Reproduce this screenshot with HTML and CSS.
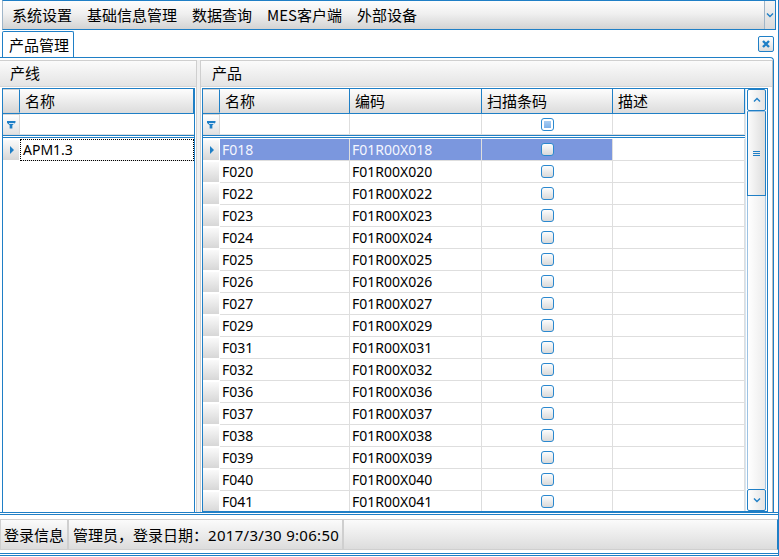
FILE: index.html
```html
<!DOCTYPE html>
<html lang="zh-CN">
<head>
    <meta charset="UTF-8">
    <title>产品管理</title>
    <link rel="stylesheet" href="styles.css">
</head>
<body>
    <div class="window">
        <!-- menu -->
        <div class="menubar">
            <span class="menu-item">系统设置</span>
            <span class="menu-item">基础信息管理</span>
            <span class="menu-item">数据查询</span>
            <span class="menu-item">MES客户端</span>
            <span class="menu-item">外部设备</span>
            <span class="menu-drop"><svg width="8" height="6" viewBox="0 0 8 6"><path d="M1 1.5 L4 4.5 L7 1.5" fill="none" stroke="#1f7fc6" stroke-width="1.4"/></svg></span>
        </div>

        <!-- tabs -->
        <div class="tabstrip">
            <div class="tab">产品管理</div>
            <div class="tab-close"><svg width="10" height="10" viewBox="0 0 10 10"><path d="M2 2 L8 8 M8 2 L2 8" stroke="#1f7fc6" stroke-width="2.4"/></svg></div>
        </div>

        <div class="tab-page">
            <!-- left: 产线 -->
            <div class="panel panel-left">
                <div class="panel-head">产线</div>
                <div class="grid grid-left">
                    <div class="g-row g-head">
                        <div class="rh"></div>
                        <div class="cell col-lname">名称</div>
                    </div>
                    <div class="g-row g-filter">
                        <div class="rh"><span class="funnel"></span></div>
                        <div class="cell col-lname"></div>
                    </div>
                    <div class="g-sep"></div>
                    <div class="g-row">
                        <div class="rh"><span class="cur"></span></div>
                        <div class="cell col-lname focus">APM1.3</div>
                    </div>
                </div>
            </div>

            <div class="splitter"></div>

            <!-- right: 产品 -->
            <div class="panel panel-right">
                <div class="panel-head">产品</div>
                <div class="grid grid-right">
                    <div class="grid-body">
                        <div class="g-row g-head">
                            <div class="rh"></div>
                            <div class="cell col-name">名称</div>
                            <div class="cell col-code">编码</div>
                            <div class="cell col-scan">扫描条码</div>
                            <div class="cell col-desc">描述</div>
                        </div>
                        <div class="g-row g-filter">
                            <div class="rh"><span class="funnel"></span></div>
                            <div class="cell col-name"></div>
                            <div class="cell col-code"></div>
                            <div class="cell col-scan"><span class="check check-mixed"></span></div>
                            <div class="cell col-desc"></div>
                        </div>
                        <div class="g-sep"></div>
                        <div class="rows" id="rows"></div>
                    </div>
                    <div class="vscroll">
                        <div class="sb-btn"><svg width="8" height="6" viewBox="0 0 8 6"><path d="M1 4.5 L4 1.5 L7 4.5" fill="none" stroke="#1f7fc6" stroke-width="1.4"/></svg></div>
                        <div class="sb-thumb"><span class="grip"></span></div>
                        <div class="sb-track"></div>
                        <div class="sb-btn"><svg width="8" height="6" viewBox="0 0 8 6"><path d="M1 1.5 L4 4.5 L7 1.5" fill="none" stroke="#1f7fc6" stroke-width="1.4"/></svg></div>
                    </div>
                </div>
            </div>
        </div>

        <!-- status -->
        <div class="statusbar">
            <div class="status-cell">登录信息</div>
            <div class="status-cell">管理员，登录日期：<span class="num">2017/3/30 9:06:50</span></div>
            <div class="status-fill"></div>
        </div>
    </div>

    <script src="app.js"></script>
</body>
</html>
```

FILE: app.js
```javascript
var products = ['018', '020', '022', '023', '024', '025', '026', '027', '029',
    '031', '032', '036', '037', '038', '039', '040', '041'];

var html = '';
products.forEach(function (n, i) {
    var sel = i === 0 ? ' selected' : '';
    html += '<div class="g-row' + sel + '">' +
        '<div class="rh">' + (i === 0 ? '<span class="cur"></span>' : '') + '</div>' +
        '<div class="cell col-name">F' + n + '</div>' +
        '<div class="cell col-code">F01R00X' + n + '</div>' +
        '<div class="cell col-scan"><span class="check"></span></div>' +
        '<div class="cell col-desc"></div>' +
        '</div>';
});
document.getElementById('rows').innerHTML = html;
```

FILE: styles.css
```css
* {
    margin: 0;
    padding: 0;
    box-sizing: border-box;
}

body {
    font-family: 'Noto Sans', 'Noto Sans CJK SC', sans-serif;
    font-size: 14px;
    color: #000;
    background: #fff;
    width: 779px;
    height: 557px;
    overflow: hidden;
}

.window {
    width: 779px;
    height: 556px;
    border-right: 1px solid #1f7fc6;
    border-bottom: 1px solid #1f7fc6;
    display: flex;
    flex-direction: column;
}

/* menu */
.menubar {
    height: 30px;
    flex: none;
    margin-left: 2px;
    margin-right: 2px;
    border: 1px solid #1f7fc6;
    border-left-color: #9fb5c8;
    background: linear-gradient(#fdfdfd 0%, #f0f0f0 45%, #d3d3d3 100%);
    display: flex;
    align-items: center;
}

.menu-item {
    font-family: 'Noto Sans CJK SC', sans-serif;
    font-size: 15px;
    line-height: 28px;
    padding: 0 7px 0 8px;
}

.menu-item:first-child {
    padding-left: 9px;
}

.menu-drop {
    margin-left: auto;
    width: 11px;
    height: 28px;
    border-left: 1px solid #9fb5c8;
    display: flex;
    align-items: center;
    justify-content: center;
    background: linear-gradient(#f4f4f4, #dadada);
}

/* tabs */
.tabstrip {
    height: 27px;
    flex: none;
    display: flex;
    align-items: flex-end;
    padding-left: 2px;
    padding-right: 4px;
}

.tab {
    font-family: 'Noto Sans CJK SC', sans-serif;
    font-size: 15px;
    height: 26px;
    width: 72px;
    border: 1px solid #1f7fc6;
    border-bottom: none;
    border-radius: 2px 2px 0 0;
    background: #fff;
    padding-left: 6px;
    line-height: 25px;
}

.tab-close {
    margin-left: auto;
    margin-bottom: 5px;
    width: 16px;
    height: 16px;
    border: 1px solid #1f7fc6;
    border-radius: 2px;
    background: linear-gradient(#ffffff, #dcdcdc);
    display: flex;
    align-items: center;
    justify-content: center;
}

.tab-page {
    height: 455px;
    flex: none;
    margin-right: 4px;
    border-top: 1px solid #1f7fc6;
    border-right: 1px solid #1f7fc6;
    border-top-right-radius: 4px;
    display: flex;
    padding-top: 2px;
}

/* panels */
.panel {
    display: flex;
    flex-direction: column;
    border: 1px solid #cfcfcf;
    border-bottom: none;
}

.panel-left {
    width: 197px;
    border-left: none;
}

.panel-right {
    flex: 1;
    border-right: 1px solid #bdbdbd;
}

.splitter {
    width: 3px;
    background: #f0f0f0;
}

.panel-head {
    font-family: 'Noto Sans CJK SC', sans-serif;
    font-size: 15px;
    height: 26px;
    flex: none;
    line-height: 24px;
    padding-left: 10px;
    background: linear-gradient(#fbfbfb, #e4e4e4);
    border-bottom: 1px solid #d6d6d6;
}

.panel-right .panel-head {
    padding-left: 11px;
}

/* grids */
.grid {
    margin: 1px 1px 0 1px;
    border: 1px solid #1f7fc6;
    border-bottom: none;
    flex: 1;
    overflow: hidden;
    background: #fff;
}

.grid-left {
    margin-left: 2px;
}

.grid-right {
    display: flex;
    margin-right: 4px;
    border-bottom: 1px solid #1f7fc6;
}

.grid-body {
    width: 542px;
    overflow: hidden;
}

.g-row {
    display: flex;
    height: 22px;
}

.cell {
    border-right: 1px solid #dedede;
    border-bottom: 1px solid #dedede;
    line-height: 21px;
    padding-left: 2px;
    white-space: nowrap;
    overflow: hidden;
}

.rh {
    width: 17px;
    flex: none;
    border: 1px solid #fff;
    border-left: none;
    background: linear-gradient(#fafafa, #d7d7d7);
    display: flex;
    align-items: center;
    justify-content: center;
}

.g-head {
    height: 25px;
    border-bottom: 1px solid #1f7fc6;
}

.g-head .cell {
    font-family: 'Noto Sans CJK SC', sans-serif;
    font-size: 15px;
    background: linear-gradient(#fdfdfd, #dcdcdc);
    border-right: 1px solid #1f7fc6;
    border-bottom: none;
    line-height: 23px;
    padding-left: 5px;
    display: block;
}

.g-head .rh {
    border-color: #d0d0d0;
    border-right: 1px solid #1f7fc6;
}

.g-filter {
    height: 21px;
}

.g-filter .rh {
    background: linear-gradient(#ffffff, #e2e2e2);
    border: 1px solid #d8d8d8;
    border-left: none;
}

.g-sep {
    height: 3px;
    border-top: 1px solid #1f7fc6;
    border-bottom: 1px solid #1f7fc6;
    margin-bottom: 1px;
}

.col-lname {
    width: 174px;
    border-right: none;
}

.col-name {
    width: 130px;
}

.col-code {
    width: 132px;
}

.col-scan {
    width: 131px;
    display: flex;
    align-items: center;
    justify-content: center;
    padding-left: 0;
}

.col-desc {
    width: 132px;
}

.focus {
    outline: 1px dotted #000;
    outline-offset: -1px;
    padding-left: 3px;
}

.selected .col-name,
.selected .col-code,
.selected .col-scan {
    background: #7b97de;
    color: #f4f6ff;
}

/* small glyphs */
.cur {
    width: 0;
    height: 0;
    border-top: 4px solid transparent;
    border-bottom: 4px solid transparent;
    border-left: 4px solid #1f7fc6;
    margin-left: 1px;
}

.funnel {
    width: 9px;
    height: 8px;
    background: #1f7fc6;
    clip-path: polygon(0 0, 100% 0, 100% 25%, 65% 60%, 65% 100%, 35% 100%, 35% 60%, 0 25%);
    position: relative;
}

.funnel::after {
    content: '';
    position: absolute;
    left: 2px;
    top: 2px;
    width: 5px;
    height: 1px;
    background: #cfe6f7;
}

.check {
    width: 13px;
    height: 13px;
    border: 1px solid #2a88cf;
    border-radius: 3px;
    background-color: #ececec;
    background-image: linear-gradient(#fdfdfd, #d9d9d9);
}

.check-mixed {
    background-image: none;
    background-color: #fff;
    position: relative;
}

.check-mixed::after {
    content: '';
    position: absolute;
    left: 2px;
    top: 2px;
    width: 7px;
    height: 7px;
    background: linear-gradient(#a9cdf2, #7db2ea);
}

/* scrollbar */
.vscroll {
    width: 22px;
    display: flex;
    flex-direction: column;
    padding: 0 1px;
    border-left: 1px solid #d6e6f3;
}

.sb-btn {
    height: 22px;
    border: 1px solid #1f7fc6;
    border-radius: 2px;
    background: linear-gradient(90deg, #ffffff, #e3e3e3);
    display: flex;
    align-items: center;
    justify-content: center;
    flex: none;
}

.sb-thumb {
    height: 85px;
    border: 1px solid #1f7fc6;
    border-top-color: #9cc2e3;
    background: linear-gradient(90deg, #fbfbfb, #dddddd);
    display: flex;
    align-items: center;
    justify-content: center;
    flex: none;
}

.grip {
    width: 7px;
    height: 5px;
    border-top: 1px solid #1f7fc6;
    border-bottom: 1px solid #1f7fc6;
    position: relative;
}

.grip::after {
    content: '';
    position: absolute;
    left: 0;
    top: 1px;
    width: 7px;
    height: 1px;
    background: #1f7fc6;
}

.sb-track {
    flex: 1;
    border-left: 1px solid #9cc2e3;
    border-right: 1px solid #9cc2e3;
    background: linear-gradient(90deg, #ffffff, #ececec);
}

/* status */
.statusbar {
    height: 42px;
    flex: none;
    border-top: 1px solid #1f7fc6;
    border-bottom: 1px solid #1f7fc6;
    display: flex;
    padding-top: 6px;
    padding-bottom: 3px;
    box-shadow: inset 0 1px 0 #fff, inset 0 2px 0 #1f7fc6;
}

.status-cell {
    font-family: 'Noto Sans CJK SC', sans-serif;
    font-size: 15px;
    border: 1px solid #cfcfcf;
    background: linear-gradient(#fbfbfb, #dcdcdc);
    line-height: 29px;
    padding: 0 3px 0 3px;
}

.status-cell + .status-cell {
    padding-left: 4px;
}

.num {
    font-family: 'Noto Sans', sans-serif;
    font-size: 15px;
    letter-spacing: 0.3px;
}

.status-fill {
    flex: 1;
    border: 1px solid #cfcfcf;
    border-right-color: #1f7fc6;
    background: linear-gradient(#fbfbfb, #dcdcdc);
}
```
